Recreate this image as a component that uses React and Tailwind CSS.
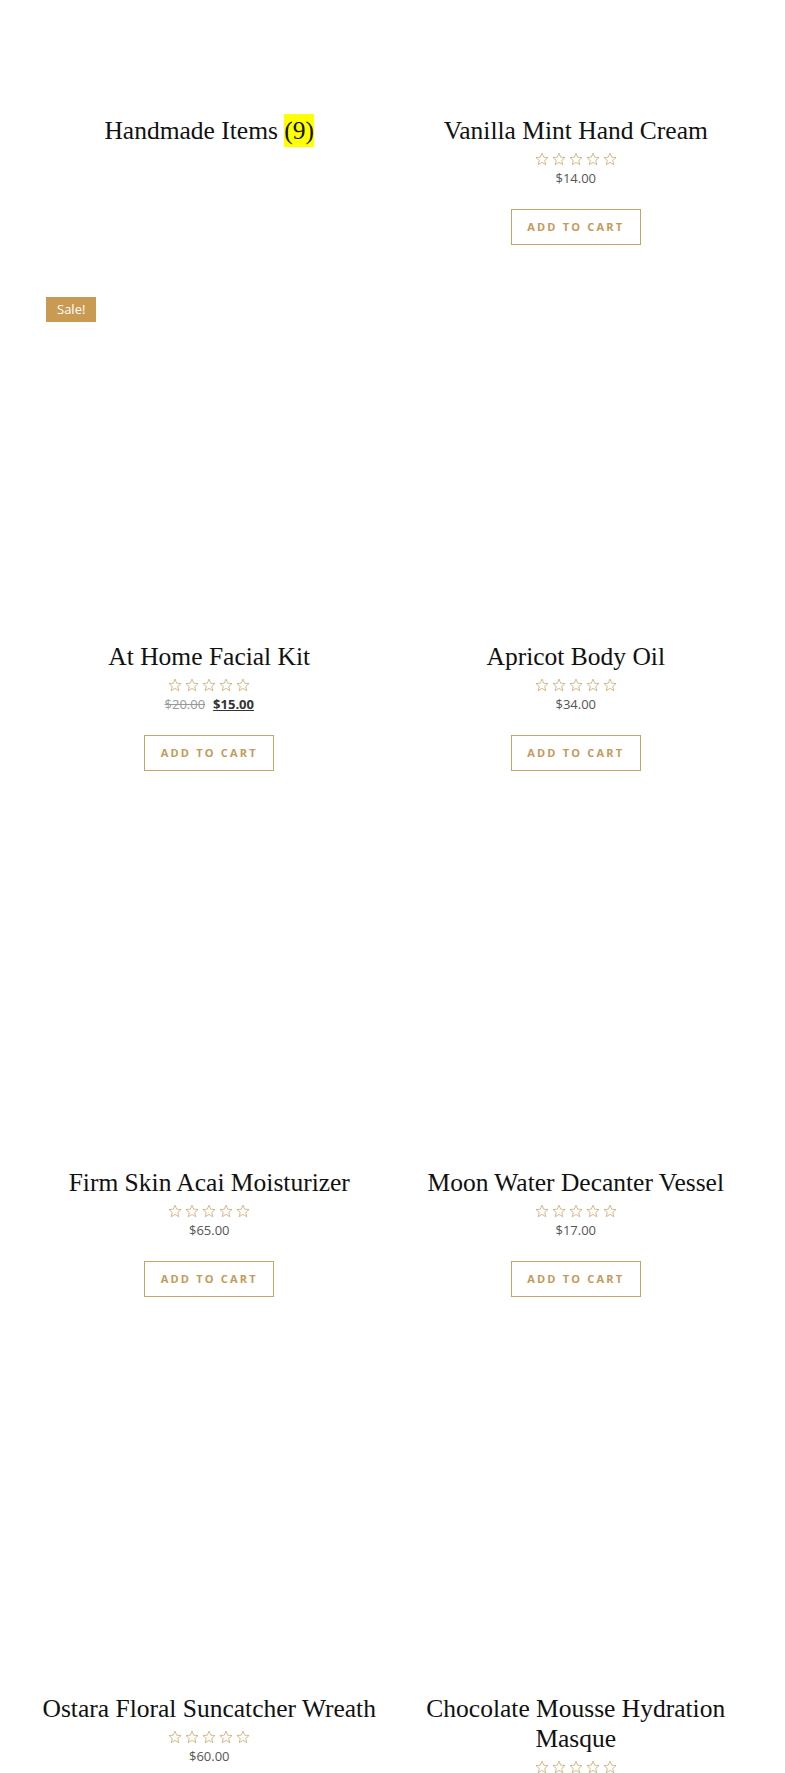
import { Fragment } from 'react';

const products = [
    { title: 'Handmade Items', count: 9, category: true },
    { title: 'Vanilla Mint Hand Cream', price: '$14.00' },
    { title: 'At Home Facial Kit', oldPrice: '$20.00', price: '$15.00', sale: true },
    { title: 'Apricot Body Oil', price: '$34.00' },
    { title: 'Firm Skin Acai Moisturizer', price: '$65.00' },
    { title: 'Moon Water Decanter Vessel', price: '$17.00' },
    { title: 'Ostara Floral Suncatcher Wreath', price: '$60.00' },
    { title: 'Chocolate Mousse Hydration Masque', price: '$35.00' },
];

function StarIcon() {
    return (
        <svg viewBox="0 0 24 24" className="w-[14px] h-[14px]" fill="none" stroke="#c9a467" strokeWidth="1.3" strokeLinejoin="miter">
            <polygon points="12,2 14.9,8.9 22.3,9.5 16.7,14.4 18.4,21.7 12,17.8 5.6,21.7 7.3,14.4 1.7,9.5 9.1,8.9" />
        </svg>
    );
}

function Stars() {
    return (
        <div className="flex justify-center gap-[3px] mt-[6px]">
            {[0, 1, 2, 3, 4].map((i) => (
                <StarIcon key={i} />
            ))}
        </div>
    );
}

function ProductCard({ item, firstRow }) {
    return (
        <div className="flex flex-col items-center text-center pb-[52px]">
            <div className={`relative self-stretch mx-[20px] ${firstRow ? 'h-[97px]' : 'h-[326px]'}`}>
                {item.sale && (
                    <span className="absolute top-0 left-0 bg-[#c99a52] text-white text-[13px] leading-[25px] px-[11px] font-['Open_Sans',sans-serif]">
                        Sale!
                    </span>
                )}
            </div>
            <h2 className="mt-[19px] text-[25.5px] leading-[30px] text-[#111] font-['Liberation_Serif',serif]">
                {item.title}
                {item.category && (
                    <>
                        {' '}
                        <mark className="bg-[#ffff00] text-[#111] py-[2px]">({item.count})</mark>
                    </>
                )}
            </h2>
            {!item.category && (
                <>
                    <Stars />
                    <div className="mt-[3px] text-[13px] leading-[18px] text-[#555] font-['Open_Sans',sans-serif]">
                        {item.oldPrice ? (
                            <>
                                <del className="text-[#999] mr-[8px]">{item.oldPrice}</del>
                                <ins className="font-bold text-[#333] underline">{item.price}</ins>
                            </>
                        ) : (
                            item.price
                        )}
                    </div>
                    <button className="mt-[22px] w-[130px] h-[36px] border border-[#c9a467] text-[#c49a5a] text-[11px] font-bold tracking-[2.2px] uppercase font-['Open_Sans',sans-serif]">
                        Add to cart
                    </button>
                </>
            )}
        </div>
    );
}

export default function App() {
    return (
        <div className="min-h-screen bg-white px-[26px]">
            <div className="grid grid-cols-2">
                {products.map((item, i) => (
                    <Fragment key={item.title}>
                        <ProductCard item={item} firstRow={i < 2} />
                    </Fragment>
                ))}
            </div>
        </div>
    );
}
